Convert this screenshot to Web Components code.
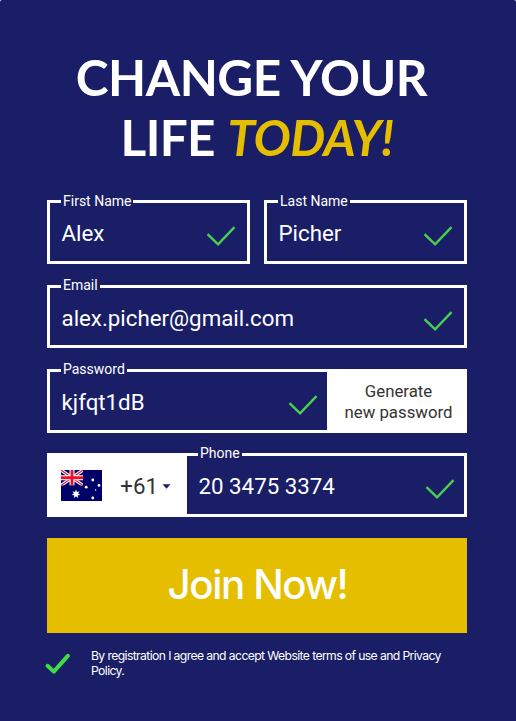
<!DOCTYPE html>
<html lang="en">
<head>
<meta charset="utf-8">
<title>Change your life today</title>
<style>
html,body{margin:0;background:#fff}
body{width:516px;height:721px;overflow:hidden}
</style>
</head>
<body>
<signup-page></signup-page>
<script>
const define = (name, html) => {
  const t = document.createElement('template');
  t.innerHTML = html;
  customElements.define(name, class extends HTMLElement {
    constructor() {
      super();
      this.attachShadow({mode: 'open'}).append(t.content.cloneNode(true));
    }
  });
};

define('check-mark', `
<style>:host{display:block;width:30px;height:22px;flex:none}svg{display:block}</style>
<svg width="30" height="22" viewBox="0 0 30 22"><path d="M1.5 9.1 12.1 19.4 28.5 2.2" fill="none" stroke="#49d04f" stroke-width="2.4"/></svg>`);

define('bold-check', `
<style>:host{display:block;width:26px;height:22px;flex:none}svg{display:block}</style>
<svg width="26" height="22" viewBox="0 0 26 22"><path d="M2.6 12.8 8.8 18.6 22.8 2.8" fill="none" stroke="#3fdc45" stroke-width="4" stroke-linecap="round" stroke-linejoin="round"/></svg>`);

define('flag-au', `
<style>:host{display:block;width:41px;height:31px;flex:none}svg{display:block}</style>
<svg width="41" height="31" viewBox="0 0 41 31">
<rect width="41" height="31" fill="#00006b"/>
<svg width="22" height="15.5" viewBox="0 0 22 15.5">
<path d="M0 0 22 15.5M22 0 0 15.5" stroke="#fff" stroke-width="3.2"/>
<path d="M0 0 22 15.5M22 0 0 15.5" stroke="#e8112d" stroke-width="1.1"/>
<path d="M11 0V15.5M0 7.75H22" stroke="#fff" stroke-width="5"/>
<path d="M11 0V15.5M0 7.75H22" stroke="#e8112d" stroke-width="2.9"/>
</svg>
<g fill="#fff">
<path d="M15 19.6 16 22.1 18.5 21.2 17.2 23.5 19.4 24.9 16.8 25.3 17 28 15 26.2 13 28 13.2 25.3 10.6 24.9 12.8 23.5 11.5 21.2 14 22.1Z"/>
<circle cx="31.8" cy="10" r="1.4"/><circle cx="25.2" cy="17.2" r="1.4"/><circle cx="38" cy="15.4" r="1.4"/><circle cx="31.8" cy="28" r="1.4"/><circle cx="34.6" cy="20" r=".8"/>
</g></svg>`);

define('text-field', `
<style>
:host{display:flex;position:relative;box-sizing:border-box;border:3px solid #fff;height:100%;min-width:0;
font:22.3px/26px Roboto,sans-serif;color:#fff;padding:17px var(--end,11px) 0 11.5px;justify-content:space-between;align-items:flex-start}
.label{position:absolute;left:11px;top:var(--label-top,-12px);background:#1a1e66;padding:0 2px;font-size:14px;line-height:18px;white-space:nowrap}
.value{white-space:nowrap}
check-mark{margin-top:5px}
</style>
<span class="label"><slot name="label"></slot></span><span class="value"><slot></slot></span><check-mark></check-mark>`);

define('password-button', `
<style>:host{display:flex;align-items:center;justify-content:center;text-align:center;box-sizing:border-box;background:#fff;color:#333;
font:16.8px/21px Roboto,sans-serif;padding:1px 0 0}</style>
<span><slot></slot></span>`);

define('country-code', `
<style>:host{display:flex;align-items:flex-start;box-sizing:border-box;background:#fff;color:#333;font:22.3px/26px Roboto,sans-serif;padding:17px 0 0 14.3px}
.code{margin:3px 0 0 18px}
svg{margin:14px 0 0 4px}</style>
<flag-au></flag-au><span class="code"><slot></slot></span>
<svg width="9" height="5" viewBox="0 0 9 5"><path d="M.5.2H8.5L4.5 4.7Z" fill="#1a1e66"/></svg>`);

define('join-button', `
<style>:host{display:flex;align-items:center;justify-content:center;box-sizing:border-box;background:#e5be00;color:#fff;font:500 40.3px/48px Inter,sans-serif;letter-spacing:-1.4px;padding:0 0 1px 1px}</style>
<span><slot></slot></span>`);

define('page-title', `
<style>:host{display:block;text-align:center;color:#fff;font:700 49.5px/60px Lato,sans-serif;white-space:nowrap}</style>
<slot></slot>`);

define('terms-row', `
<style>:host{display:flex;color:#fff;font:12.2px/15px Inter,sans-serif;letter-spacing:-.61px}
bold-check{margin:5px 20px 0 -2px}
p{margin:0;width:362px}</style>
<bold-check></bold-check><p><slot></slot></p>`);

define('signup-page', `
<style>
:host{display:flex;flex-direction:column;box-sizing:border-box;width:516px;height:721px;background:#1a1e66;border-radius:2px 2px 0 0;padding:47px 49px 0 47px}
page-title{height:153px}
.l1{letter-spacing:-.45px;margin-right:11px}
.l2{letter-spacing:-.6px}
em{color:#e5be00;font-style:italic;margin-left:1px}
.row{display:grid;height:64px}
.names{grid-template-columns:203px 203px;gap:14px;margin-bottom:21px;--label-top:-11px}
.email{height:63px;margin-bottom:21px}
.pass{grid-template-columns:283px 137px;margin-bottom:20px;--end:9.5px}
.phone{grid-template-columns:137px 283px;margin-bottom:21px;--end:9.5px}
join-button{height:95px;margin-bottom:15px}
</style>
<page-title><div class="l1">CHANGE YOUR</div><div class="l2">LIFE <em>TODAY!</em></div></page-title>
<div class="row names"><text-field><span slot="label">First Name</span>Alex</text-field><text-field><span slot="label">Last Name</span>Picher</text-field></div>
<div class="row email"><text-field><span slot="label">Email</span>alex.picher@gmail.com</text-field></div>
<div class="row pass"><text-field><span slot="label">Password</span>kjfqt1dB</text-field><password-button>Generate<br>new password</password-button></div>
<div class="row phone"><country-code>+61</country-code><text-field><span slot="label">Phone</span>20 3475 3374</text-field></div>
<join-button>Join Now!</join-button>
<terms-row>By registration I agree and accept Website terms of use and Privacy Policy.</terms-row>`);
</script>
</body>
</html>
